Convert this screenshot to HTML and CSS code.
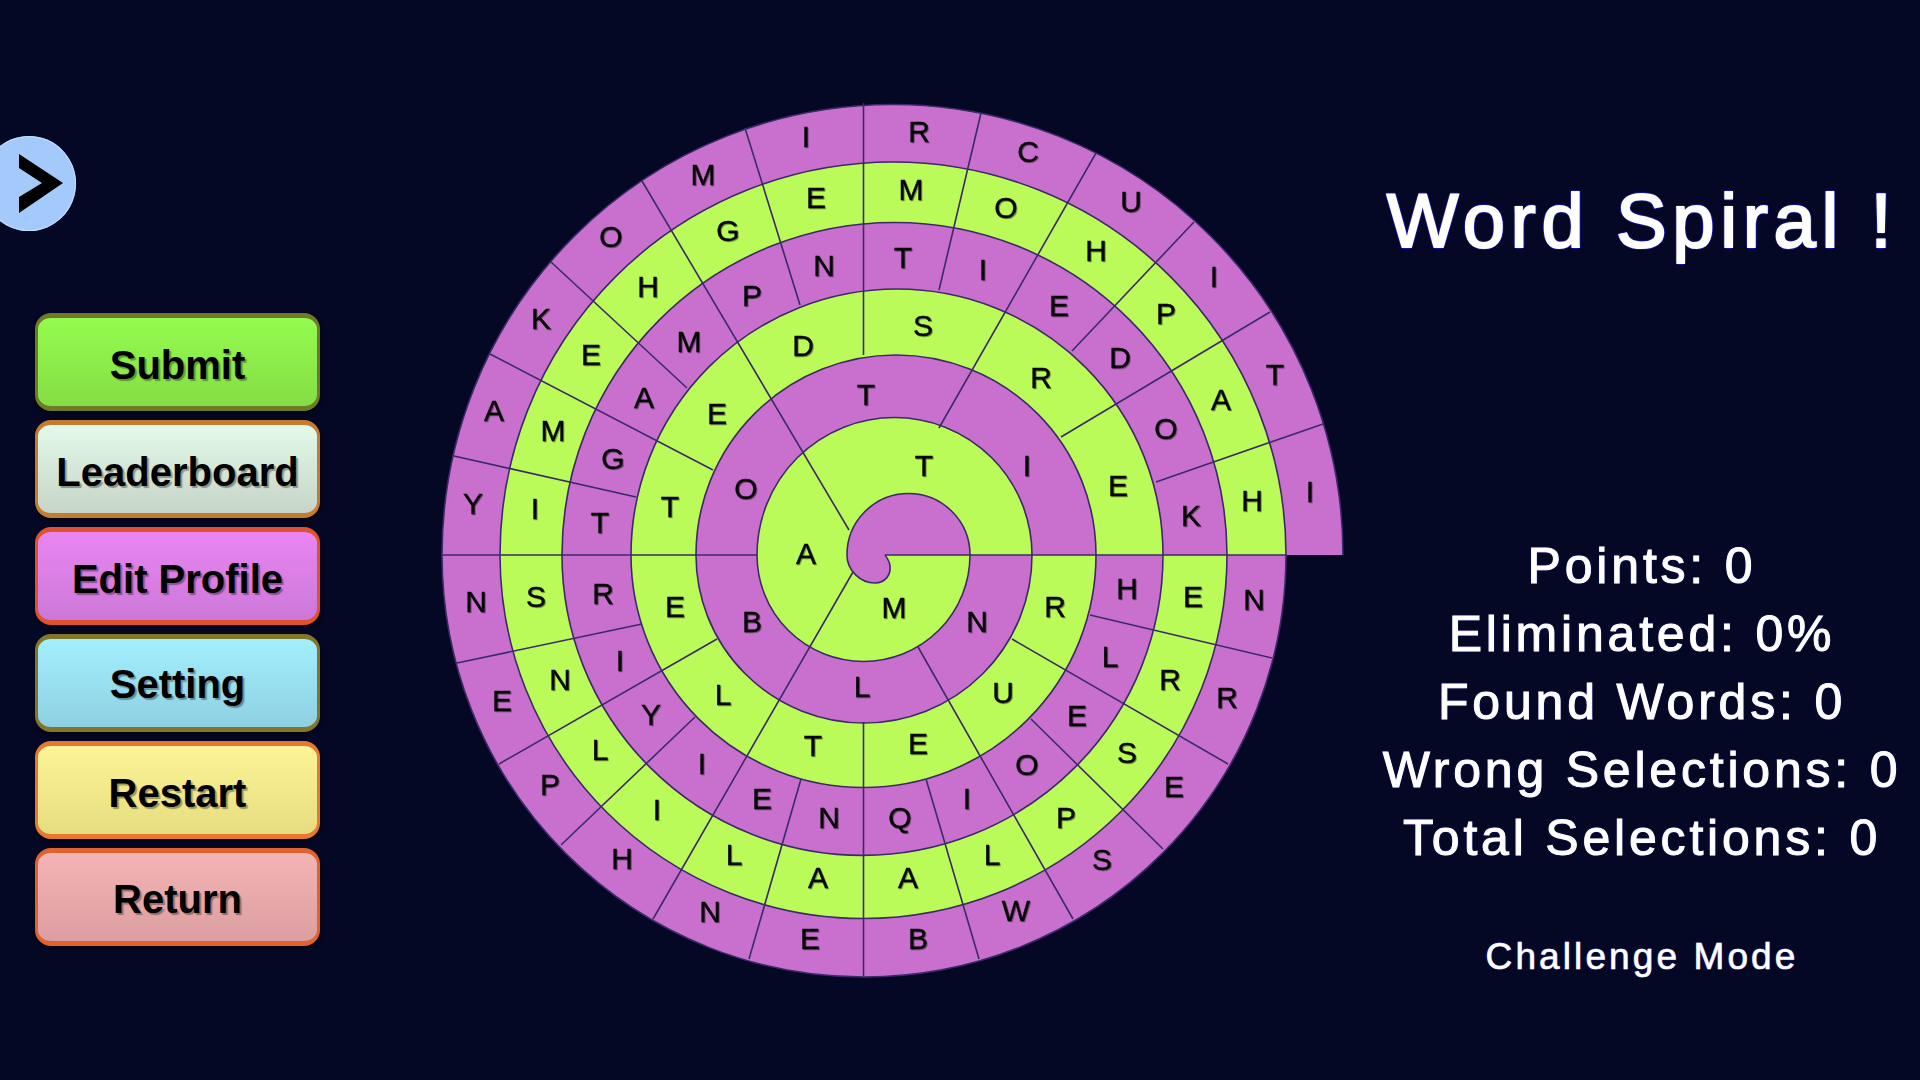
FILE: index.html
```html
<!DOCTYPE html>
<html lang="en">
<head>
    <meta charset="UTF-8">
    <title>Word Spiral</title>
    <link rel="stylesheet" href="styles.css">
</head>
<body>
    <div class="page">
        <aside class="sidebar">
            <div class="toggle">
                <svg width="94" height="95" viewBox="-18 136 94 95">
                    <path d="M19 154 L63 183 L19 213 L19 197 L42 183 L19 168 Z" fill="#000"/>
                </svg>
            </div>
            <div class="menu">
                <button class="btn btn-submit">Submit</button>
                <button class="btn btn-leaderboard">Leaderboard</button>
                <button class="btn btn-profile">Edit Profile</button>
                <button class="btn btn-setting">Setting</button>
                <button class="btn btn-restart">Restart</button>
                <button class="btn btn-return">Return</button>
            </div>
        </aside>

        <main class="board">
            <svg width="960" height="920" viewBox="400 80 960 920">
                <!-- top half, outermost turn first -->
                <path class="purple" d="M1343 555 A450.5 450.5 0 0 0 442 555 Z"/>
                <path class="green" d="M1286 555 A393 393 0 0 0 500 555 Z"/>
                <path class="purple" d="M1227 555 A332.5 332.5 0 0 0 562 555 Z"/>
                <path class="green" d="M1163 555 A266 266 0 0 0 631 555 Z"/>
                <path class="purple" d="M1096 555 A200 200 0 0 0 696 555 Z"/>
                <path class="green" d="M1032 555 A137.5 137.5 0 0 0 757 555 Z"/>
                <path class="purple" d="M970 555 A61.5 61.5 0 0 0 847 555 Z"/>
                <!-- bottom half -->
                <path class="purple" d="M442 555 A422 422 0 0 0 1286 555 Z"/>
                <path class="green" d="M500 555 A363.5 363.5 0 0 0 1227 555 Z"/>
                <path class="purple" d="M562 555 A300.5 300.5 0 0 0 1163 555 Z"/>
                <path class="green" d="M631 555 A232.5 232.5 0 0 0 1096 555 Z"/>
                <path class="purple" d="M696 555 A168 168 0 0 0 1032 555 Z"/>
                <path class="green" d="M757 555 A106.5 106.5 0 0 0 970 555 Z"/>
                <path class="purple" d="M847 555 C847 570 860 583 875 583 C885 583 891 575 890 566 C889.5 561 887 558 885 555 Z"/>

                <path class="spiral" d="M1343 555 A450.5 450.5 0 0 0 442 555 A422 422 0 0 0 1286 555 A393 393 0 0 0 500 555 A363.5 363.5 0 0 0 1227 555 A332.5 332.5 0 0 0 562 555 A300.5 300.5 0 0 0 1163 555 A266 266 0 0 0 631 555 A232.5 232.5 0 0 0 1096 555 A200 200 0 0 0 696 555 A168 168 0 0 0 1032 555 A137.5 137.5 0 0 0 757 555 A106.5 106.5 0 0 0 970 555 A61.5 61.5 0 0 0 847 555 C847 570 860 583 875 583 C885 583 891 575 890 566 C889.5 561 887 558 885 555"/>

                <path class="dividers" d="
                    M442 555 L757 555 M885 555 L1286 555
                    M863.5 103 L863.5 355 M863.5 722 L863.5 976
                    M745 128 L800 305
                    M642 181 L849 530
                    M551 262 L687 388
                    M490 354 L713 470
                    M454 456 L636 497
                    M457 663 L642 624
                    M499 764 L717 639
                    M561 845 L695 717
                    M653 919 L853 572
                    M749 959 L801 779
                    M979 959 L926 779
                    M1073 919 L918 647
                    M1163 849 L1031 719
                    M1228 764 L1012 639
                    M1272 658 L1090 615
                    M1323 424 L1156 482
                    M1270 312 L1061 437
                    M1194 222 L1072 351
                    M1096 153 L939 428
                    M981 113 L939 290"/>

                <g class="letters" transform="translate(0 10)">
                    <text x="806" y="137">I</text>
                    <text x="703" y="175">M</text>
                    <text x="611" y="237">O</text>
                    <text x="541" y="319">K</text>
                    <text x="494" y="411">A</text>
                    <text x="473" y="504">Y</text>
                    <text x="816" y="198">E</text>
                    <text x="728" y="231">G</text>
                    <text x="648" y="287">H</text>
                    <text x="591" y="355">E</text>
                    <text x="553" y="431">M</text>
                    <text x="535" y="509">I</text>
                    <text x="824" y="266">N</text>
                    <text x="752" y="296">P</text>
                    <text x="689" y="342">M</text>
                    <text x="644" y="398">A</text>
                    <text x="613" y="459">G</text>
                    <text x="600" y="523">T</text>
                    <text x="803" y="346">D</text>
                    <text x="717" y="414">E</text>
                    <text x="670" y="507">T</text>
                    <text x="866" y="395">T</text>
                    <text x="746" y="489">O</text>
                    <text x="806" y="554">A</text>

                    <text x="919" y="132">R</text>
                    <text x="1028" y="152">C</text>
                    <text x="1131" y="202">U</text>
                    <text x="1214" y="277">I</text>
                    <text x="1275" y="375">T</text>
                    <text x="1310" y="492">I</text>
                    <text x="911" y="190">M</text>
                    <text x="1006" y="208">O</text>
                    <text x="1096" y="251">H</text>
                    <text x="1166" y="314">P</text>
                    <text x="1221" y="400">A</text>
                    <text x="1252" y="501">H</text>
                    <text x="903" y="258">T</text>
                    <text x="983" y="270">I</text>
                    <text x="1059" y="306">E</text>
                    <text x="1120" y="358">D</text>
                    <text x="1166" y="429">O</text>
                    <text x="1191" y="516">K</text>
                    <text x="923" y="326">S</text>
                    <text x="1041" y="378">R</text>
                    <text x="1118" y="486">E</text>
                    <text x="1027" y="466">I</text>
                    <text x="924" y="466">T</text>

                    <text x="476" y="602">N</text>
                    <text x="536" y="597">S</text>
                    <text x="603" y="594">R</text>
                    <text x="675" y="607">E</text>
                    <text x="752" y="622">B</text>
                    <text x="502" y="701">E</text>
                    <text x="560" y="680">N</text>
                    <text x="620" y="661">I</text>
                    <text x="723" y="695">L</text>
                    <text x="862" y="687">L</text>
                    <text x="550" y="785">P</text>
                    <text x="600" y="750">L</text>
                    <text x="651" y="715">Y</text>
                    <text x="813" y="746">T</text>
                    <text x="702" y="764">I</text>
                    <text x="622" y="859">H</text>
                    <text x="657" y="810">I</text>
                    <text x="762" y="799">E</text>
                    <text x="829" y="818">N</text>
                    <text x="734" y="855">L</text>
                    <text x="710" y="912">N</text>
                    <text x="818" y="878">A</text>
                    <text x="810" y="939">E</text>

                    <text x="894" y="608">M</text>
                    <text x="977" y="622">N</text>
                    <text x="1055" y="607">R</text>
                    <text x="1127" y="589">H</text>
                    <text x="1193" y="597">E</text>
                    <text x="1254" y="600">N</text>
                    <text x="1110" y="657">L</text>
                    <text x="1170" y="680">R</text>
                    <text x="1227" y="698">R</text>
                    <text x="1003" y="693">U</text>
                    <text x="1077" y="716">E</text>
                    <text x="1127" y="753">S</text>
                    <text x="1174" y="787">E</text>
                    <text x="918" y="744">E</text>
                    <text x="1027" y="765">O</text>
                    <text x="1066" y="818">P</text>
                    <text x="1102" y="860">S</text>
                    <text x="967" y="799">I</text>
                    <text x="900" y="818">Q</text>
                    <text x="992" y="855">L</text>
                    <text x="1016" y="911">W</text>
                    <text x="908" y="878">A</text>
                    <text x="918" y="939">B</text>
                </g>
            </svg>
        </main>

        <section class="panel">
            <h1 class="title">Word Spiral !</h1>
            <div class="stats">
                <div>Points: 0</div>
                <div>Eliminated: 0%</div>
                <div>Found Words: 0</div>
                <div>Wrong Selections: 0</div>
                <div>Total Selections: 0</div>
            </div>
            <div class="mode">Challenge Mode</div>
        </section>
    </div>
</body>
</html>
```

FILE: styles.css
```css
body {
    margin: 0;
    background: #050824;
    font-family: "Liberation Sans", Arial, sans-serif;
    overflow: hidden;
}

.page {
    display: flex;
    width: 1920px;
    height: 1080px;
}

.sidebar {
    flex: none;
    width: 400px;
    padding-top: 136px;
    box-sizing: border-box;
}

.toggle {
    width: 94px;
    height: 95px;
    margin-left: -18px;
    border-radius: 50%;
    background: #a4c9fb;
    box-shadow: inset 0 0 0 1px #c4dcff;
}

.toggle svg {
    display: block;
}

.menu {
    display: flex;
    flex-direction: column;
    gap: 9px;
    width: 285px;
    margin: 82px 0 0 35px;
}

.btn {
    display: flex;
    align-items: center;
    justify-content: center;
    height: 98px;
    padding: 6px 0 0;
    box-sizing: border-box;
    border-style: solid;
    border-width: 5px 3.5px;
    border-radius: 16px;
    font-family: inherit;
    font-size: 40px;
    font-weight: bold;
    color: #000;
    text-shadow: 2px 2px 1px rgba(0, 0, 0, 0.35);
    box-shadow: 0 3px 4px rgba(0, 0, 0, 0.4);
}

.btn-submit {
    border-color: #6f7a26;
    background: linear-gradient(#94fb4e, #85dd45);
}

.btn-leaderboard {
    border-color: #c67c30;
    background: linear-gradient(#e3f9e9, #c6d5c7);
}

.btn-profile {
    border-color: #e0522f;
    background: linear-gradient(#e985f2, #cc78d8);
}

.btn-setting {
    padding-top: 2px;
    border-color: #83752a;
    background: linear-gradient(#a3effd, #8ed0e2);
}

.btn-restart {
    border-color: #e57a2e;
    background: linear-gradient(#fdf498, #e5dd80);
}

.btn-return {
    padding-top: 5px;
    border-color: #e0622e;
    background: linear-gradient(#f4b4b6, #dc9ea0);
}

.board {
    flex: none;
    width: 960px;
    padding-top: 80px;
}

.board svg {
    display: block;
}

.purple {
    fill: #c970cf;
}

.green {
    fill: #bbfb59;
}

.spiral,
.dividers {
    fill: none;
    stroke: #3c2a68;
    stroke-width: 1.6;
}

.letters text {
    font-size: 30px;
    text-anchor: middle;
    fill: #050505;
    stroke: #050505;
    stroke-width: 0.4;
}

.letters {
    filter: drop-shadow(1.5px 1.5px 0.5px rgba(0, 0, 0, 0.4));
}

.panel {
    flex: none;
    width: 564px;
    color: #fff;
    text-align: center;
}

.title {
    margin: 181px 0 0;
    font-size: 76px;
    font-weight: normal;
    line-height: 80px;
    letter-spacing: 5.6px;
    white-space: nowrap;
    -webkit-text-stroke: 2px #fff;
    text-shadow: 2px 0 0 #1414a0, -2px 0 0 #1414a0, 0 2px 0 #1414a0, 0 -2px 0 #1414a0;
}

.stats {
    margin-top: 271px;
    font-size: 50px;
    line-height: 68px;
    letter-spacing: 3.8px;
    -webkit-text-stroke: 1px #fff;
    text-shadow: 0 0 2px #2a2ad0;
}

.mode {
    margin-top: 65px;
    font-size: 37px;
    line-height: 40px;
    letter-spacing: 3.1px;
    -webkit-text-stroke: 0.6px #fff;
    text-shadow: 0 0 2px #2a2ad0;
}
```
